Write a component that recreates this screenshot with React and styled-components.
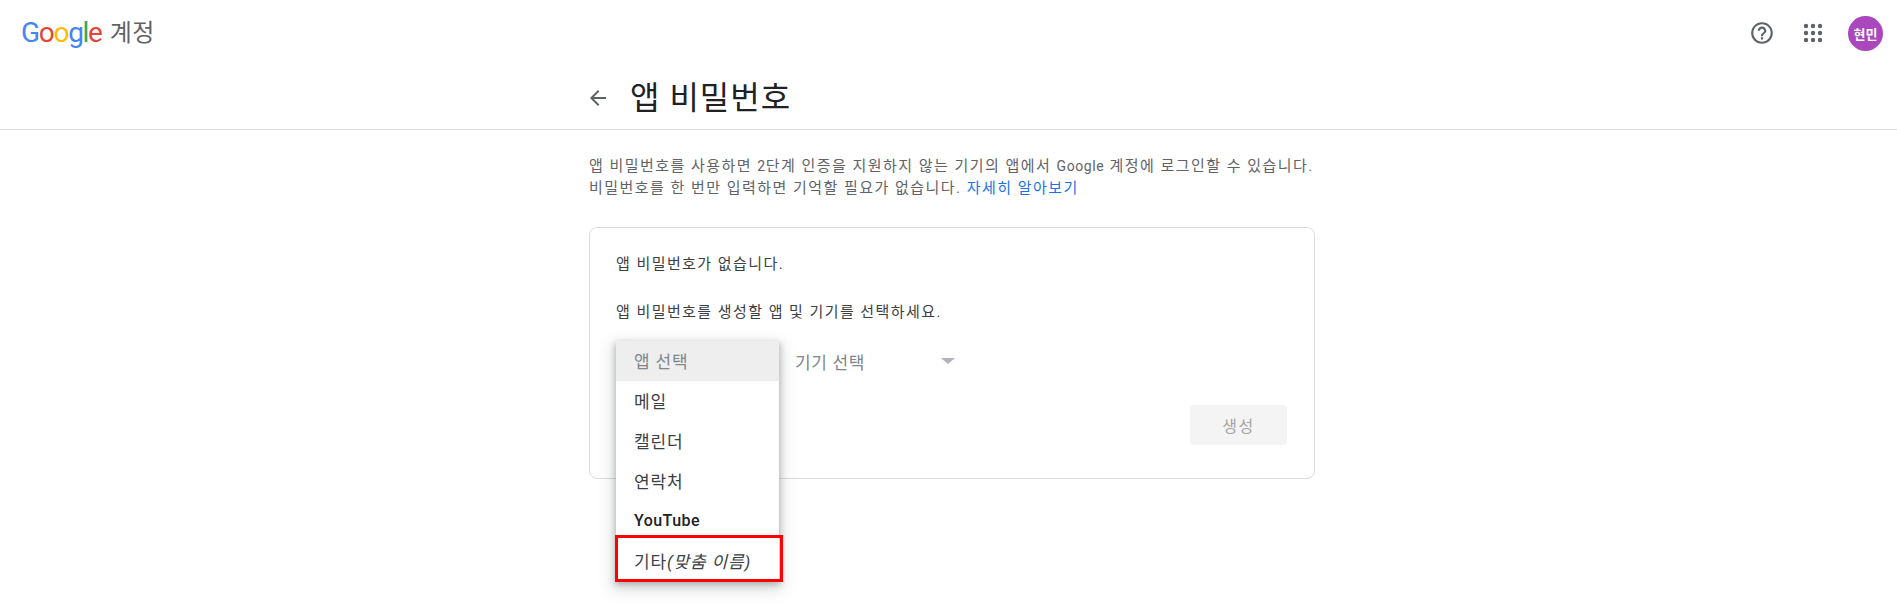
import React from 'react';
import styled, { createGlobalStyle } from 'styled-components';

const Global = createGlobalStyle`
  html, body { margin: 0; padding: 0; background: #fff; }
  body {
    font-family: Roboto, "Noto Sans CJK KR", sans-serif;
    color: #3c4043;
    overflow: hidden;
  }
`;

const Page = styled.div`
  width: 1897px;
  height: 616px;
  overflow: hidden;
`;

const TopBar = styled.header`
  height: 66px;
  display: flex;
  align-items: center;
  justify-content: space-between;
  padding: 0 14px 0 21px;
`;

const Brand = styled.div`
  display: flex;
  align-items: center;
  gap: 8px;
`;

const Logo = styled.span`
  font-family: Roboto, sans-serif;
  font-size: 28px;
  letter-spacing: -1.3px;
  line-height: 30px;
`;

const Letter = styled.span`
  color: ${(p) => p.$color};
`;

const BrandName = styled.span`
  font-size: 24px;
  letter-spacing: 0.5px;
  color: #5f6368;
  line-height: 30px;
  margin-top: -1px;
`;

const Tools = styled.div`
  display: flex;
  align-items: center;
  gap: 26px;
`;

const Avatar = styled.div`
  width: 35px;
  height: 35px;
  margin-left: -3px;
  border-radius: 50%;
  background: #ab47bc;
  color: #fff;
  font-size: 13px;
  font-weight: 700;
  display: flex;
  align-items: center;
  justify-content: center;
`;

const TitleBar = styled.div`
  height: 64px;
  box-sizing: border-box;
  border-bottom: 1px solid #dadce0;
  padding-left: 586px;
  display: flex;
  align-items: center;
  gap: 20px;
`;

const BackButton = styled.span`
  display: flex;
  margin-top: 1px;
`;

const Title = styled.h1`
  margin: 1px 0 0;
  font-size: 32px;
  font-weight: 400;
  line-height: 40px;
  letter-spacing: 1px;
  color: #202124;
`;

const Main = styled.main`
  width: 726px;
  margin-left: 589px;
  padding-top: 25px;
`;

const Intro = styled.p`
  margin: 0;
  font-size: 15px;
  line-height: 22px;
  letter-spacing: 1.47px;
  color: #5f6368;
  white-space: nowrap;
`;

const Latin = styled.span`
  font-size: 14px;
  letter-spacing: 0.6px;
`;

const LearnMore = styled.a`
  color: #1a73e8;
  text-decoration: none;
`;

const Card = styled.section`
  position: relative;
  margin-top: 28px;
  height: 252px;
  box-sizing: border-box;
  border: 1px solid #dadce0;
  border-radius: 8px;
  padding: 25px 26px 33px;
  display: flex;
  flex-direction: column;
`;

const CardText = styled.p`
  margin: 0 0 26px;
  font-size: 15px;
  line-height: 22px;
  letter-spacing: 1.44px;
  color: #3c4043;
`;

const SelectRow = styled.div`
  display: flex;
  align-items: center;
  height: 40px;
  margin-top: -8px;
  padding-left: 179px;
`;

const DeviceSelect = styled.div`
  width: 160px;
  display: flex;
  align-items: center;
  justify-content: space-between;
  font-size: 17px;
  letter-spacing: 0.65px;
  color: #80868b;
`;

const Caret = styled.span`
  width: 0;
  height: 0;
  border-left: 7px solid transparent;
  border-right: 7px solid transparent;
  border-top: 6px solid #b0b3b8;
`;

const Actions = styled.div`
  margin-top: auto;
  display: flex;
  justify-content: flex-end;
`;

const Create = styled.button`
  width: 97px;
  height: 40px;
  margin-right: 1px;
  border: 0;
  border-radius: 4px;
  background: #f4f4f4;
  color: #a3a3a3;
  font: inherit;
  font-size: 16px;
  letter-spacing: 1.6px;
`;

const Menu = styled.ul`
  position: absolute;
  left: 26px;
  top: 113px;
  width: 163px;
  margin: 0;
  padding: 0;
  list-style: none;
  background: #fff;
  box-shadow: 0 3px 6px 1px rgba(60, 64, 67, 0.3), 0 6px 14px 4px rgba(60, 64, 67, 0.15);
`;

const MenuItem = styled.li`
  height: 40px;
  box-sizing: border-box;
  padding: 0 0 2px 18px;
  display: flex;
  align-items: center;
  font-size: ${(p) => (p.$bold ? '16px' : '17px')};
  letter-spacing: ${(p) => (p.$bold ? '0.45px' : '0.85px')};
  color: ${(p) => (p.$selected ? '#80868b' : p.$bold ? '#202124' : '#3c4043')};
  background: ${(p) => (p.$selected ? '#eeeeee' : '#fff')};
  font-weight: ${(p) => (p.$bold ? 500 : 400)};
`;

const Custom = styled.em`
  font-style: italic;
`;

const Highlight = styled.div`
  position: absolute;
  left: 25px;
  top: 307px;
  width: 168px;
  height: 47px;
  box-sizing: border-box;
  border: 3px solid #f00;
`;

const HelpIcon = () => (
  <svg width="26" height="26" viewBox="0 0 24 24" fill="#5f6368">
    <path d="M11 18h2v-2h-2v2zm1-16C6.48 2 2 6.48 2 12s4.48 10 10 10 10-4.48 10-10S17.52 2 12 2zm0 18c-4.41 0-8-3.59-8-8s3.59-8 8-8 8 3.59 8 8-3.59 8-8 8zm0-14c-2.21 0-4 1.79-4 4h2c0-1.1.9-2 2-2s2 .9 2 2c0 2-3 1.75-3 5h2c0-2.25 3-2.5 3-5 0-2.21-1.79-4-4-4z" />
  </svg>
);

const AppsIcon = () => (
  <svg width="24" height="24" viewBox="0 0 24 24" fill="#5f6368">
    {[5, 12, 19].flatMap((y) =>
      [5, 12, 19].map((x) => <circle key={`${x}-${y}`} cx={x} cy={y} r="2.2" />)
    )}
  </svg>
);

const BackIcon = () => (
  <svg width="24" height="24" viewBox="0 0 24 24" fill="#5f6368">
    <path d="M20 11H7.83l5.59-5.59L12 4l-8 8 8 8 1.41-1.41L7.83 13H20v-2z" />
  </svg>
);

const logoLetters = [
  ['G', '#4285f4'],
  ['o', '#ea4335'],
  ['o', '#fbbc05'],
  ['g', '#4285f4'],
  ['l', '#34a853'],
  ['e', '#ea4335'],
];

const App = () => {
  return (
    <Page>
      <Global />
      <TopBar>
        <Brand>
          <Logo>
            {logoLetters.map(([ch, color], i) => (
              <Letter key={i} $color={color}>
                {ch}
              </Letter>
            ))}
          </Logo>
          <BrandName>계정</BrandName>
        </Brand>
        <Tools>
          <HelpIcon />
          <AppsIcon />
          <Avatar>현민</Avatar>
        </Tools>
      </TopBar>
      <TitleBar>
        <BackButton>
          <BackIcon />
        </BackButton>
        <Title>앱 비밀번호</Title>
      </TitleBar>
      <Main>
        <Intro>
          앱 비밀번호를 사용하면 <Latin>2</Latin>단계 인증을 지원하지 않는 기기의 앱에서 <Latin>Google</Latin> 계정에 로그인할 수 있습니다.
        </Intro>
        <Intro>
          비밀번호를 한 번만 입력하면 기억할 필요가 없습니다. <LearnMore href="#">자세히 알아보기</LearnMore>
        </Intro>
        <Card>
          <CardText>앱 비밀번호가 없습니다.</CardText>
          <CardText>앱 비밀번호를 생성할 앱 및 기기를 선택하세요.</CardText>
          <SelectRow>
            <DeviceSelect>
              기기 선택
              <Caret />
            </DeviceSelect>
          </SelectRow>
          <Actions>
            <Create disabled>생성</Create>
          </Actions>
          <Menu>
            <MenuItem $selected>앱 선택</MenuItem>
            <MenuItem>메일</MenuItem>
            <MenuItem>캘린더</MenuItem>
            <MenuItem>연락처</MenuItem>
            <MenuItem $bold>YouTube</MenuItem>
            <MenuItem>
              기타<Custom>(맞춤 이름)</Custom>
            </MenuItem>
          </Menu>
          <Highlight />
        </Card>
      </Main>
    </Page>
  );
};

export default App;
